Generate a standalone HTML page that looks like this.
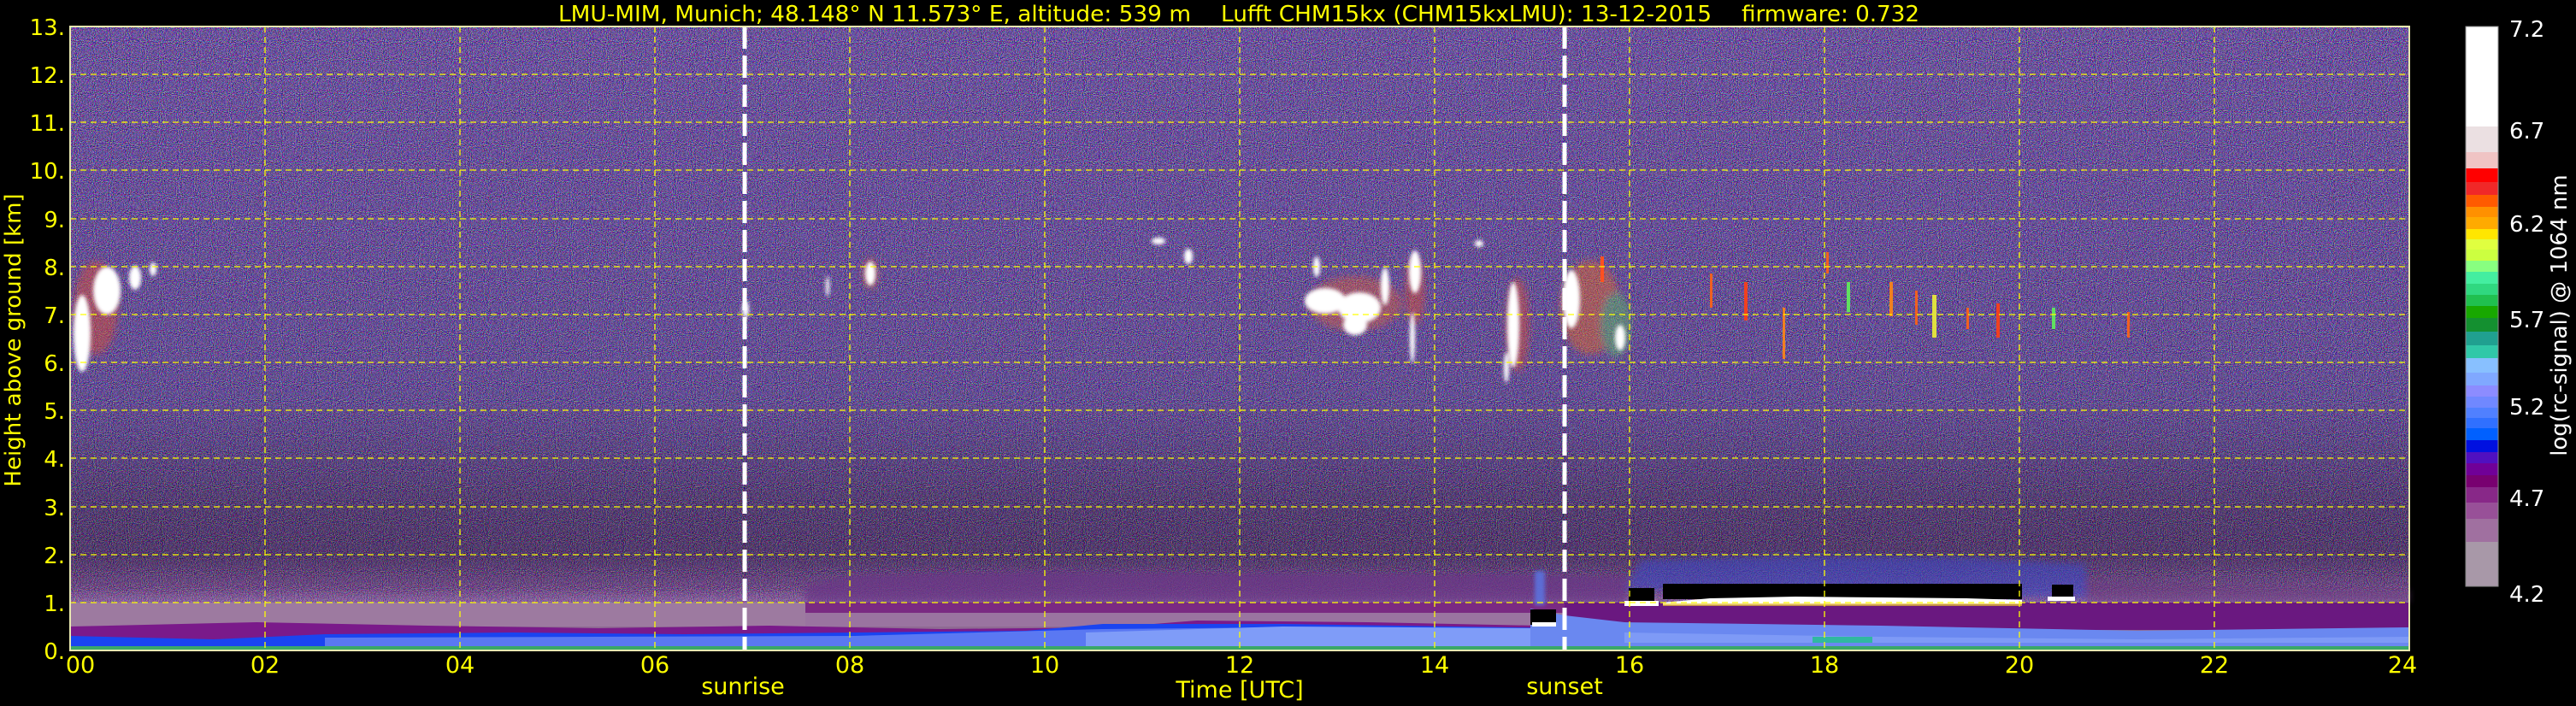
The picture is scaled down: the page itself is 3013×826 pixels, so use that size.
<!DOCTYPE html>
<html><head><meta charset="utf-8"><style>
html,body{margin:0;padding:0;background:#000;width:3013px;height:826px;overflow:hidden}
svg{display:block}
text{font-family:"DejaVu Sans","Liberation Sans",sans-serif}
</style></head><body>
<svg width="3013" height="826" viewBox="0 0 3013 826" xmlns="http://www.w3.org/2000/svg">
<defs>
<filter id="nz" x="0" y="0" width="100%" height="100%">
<feTurbulence type="fractalNoise" baseFrequency="0.95" numOctaves="1" seed="3" result="t"/>
<feColorMatrix in="t" type="matrix" values="6 0 0 0 -2.6  0 6 0 0 -2.9  0 0 6 0 -2.2  0 0 0 0 1"/>
</filter>
<filter id="bl" x="-50%" y="-50%" width="200%" height="200%"><feGaussianBlur stdDeviation="4"/></filter>
<filter id="bl2" x="-50%" y="-50%" width="200%" height="200%"><feGaussianBlur stdDeviation="2"/></filter>
<linearGradient id="bg" x1="0" y1="31" x2="0" y2="761" gradientUnits="userSpaceOnUse">
<stop offset="0" stop-color="#4a4676"/>
<stop offset="0.6" stop-color="#43406c"/>
<stop offset="0.77" stop-color="#30283e"/>
<stop offset="0.85" stop-color="#30243a"/>
<stop offset="0.9" stop-color="#5a3e62"/>
<stop offset="0.925" stop-color="#8a6890"/>
<stop offset="1" stop-color="#946c96"/>
</linearGradient>
<linearGradient id="fade" x1="0" y1="31" x2="0" y2="705" gradientUnits="userSpaceOnUse">
<stop offset="0" stop-color="#fff" stop-opacity="0.5"/>
<stop offset="0.6" stop-color="#fff" stop-opacity="0.45"/>
<stop offset="1" stop-color="#fff" stop-opacity="0.35"/>
</linearGradient>
<mask id="fm"><rect x="82" y="31" width="2736" height="674" fill="url(#fade)"/></mask>
</defs>

<rect x="82" y="31" width="2736" height="730" fill="url(#bg)"/>
<rect x="82" y="31" width="2736" height="674" filter="url(#nz)" mask="url(#fm)"/>

<g filter="url(#bl)">
<path d="M942 705 L942 685 L1000 672 L1200 668 L1500 670 L1800 672 L1902 675 L1902 705Z" fill="#6a3485" opacity="0.75"/>
<path d="M1900 690 L1920 655 L2100 650 L2300 652 L2440 660 L2440 700Z" fill="#3a48c8" opacity="0.55"/>
<path d="M2440 705 L2440 680 L2600 685 L2818 690 L2818 705Z" fill="#6a3a7e" opacity="0.55"/>
</g>

<rect x="82" y="705" width="860" height="28" fill="#9d7aa0"/>
<rect x="942" y="705" width="960" height="12" fill="#7a2a82"/>
<rect x="942" y="717" width="900" height="16" fill="#9a74a0"/>
<rect x="1830" y="705" width="988" height="32" fill="#6a1880"/>
<path d="M82 733 L300 728 L500 732 L700 735 L900 732 L1100 736 L1300 734 L1400 726 L1600 728 L1800 732 L1840 740 L1840 761 L82 761Z" fill="#7a1a8a"/>
<path d="M82 744 L250 748 L380 742 L600 740 L800 742 L1000 740 L1200 738 L1290 730 L1500 730 L1840 735 L1840 758 L82 758Z" fill="#1a44f0"/>
<path d="M380 746 L700 745 L1000 744 L1290 736 L1500 734 L1840 740 L1840 756 L380 756Z" fill="#5a78f2"/>
<path d="M1270 740 L1500 733 L1800 735 L1840 742 L1840 756 L1270 756Z" fill="#7f9cf8"/>
<path d="M1790 712 L1830 720 L1900 728 L2200 732 L2500 738 L2818 734 L2818 757 L1790 757Z" fill="#6a88f0"/>
<path d="M1900 740 L2200 745 L2500 748 L2818 745 L2818 752 L1900 752Z" fill="#7e9af6"/>
<rect x="2120" y="745" width="70" height="7" fill="#30b8a0"/>
<rect x="82" y="756" width="2736" height="5" fill="#3aa868"/>

<rect x="1790" y="713" width="30" height="18" fill="#000"/>
<rect x="1792" y="728" width="28" height="5" fill="#fff"/>
<rect x="1905" y="688" width="30" height="17" fill="#000"/>
<rect x="1945" y="683" width="420" height="18" fill="#000"/>
<rect x="2400" y="684" width="25" height="15" fill="#000"/>
<rect x="1900" y="703" width="40" height="6" fill="#fff"/>
<path d="M1945 705 L2000 700 L2100 698 L2200 699 L2300 700 L2365 702 L2365 707 L1945 708Z" fill="#fff"/>
<rect x="2395" y="698" width="32" height="5" fill="#fff"/>
<rect x="1945" y="706" width="420" height="3" fill="#e8c030" opacity="0.7"/>
<rect x="1795" y="668" width="12" height="40" fill="#5a78e8" opacity="0.8" filter="url(#bl2)"/>

<g filter="url(#bl)" opacity="0.45">
<ellipse cx="112" cy="360" rx="26" ry="55" fill="#e05030"/>
<ellipse cx="1018" cy="320" rx="9" ry="18" fill="#e06030"/>
<ellipse cx="1585" cy="355" rx="55" ry="32" fill="#d86040"/>
<ellipse cx="1655" cy="340" rx="12" ry="40" fill="#e05030"/>
<ellipse cx="1775" cy="380" rx="14" ry="55" fill="#e05030"/>
<ellipse cx="1860" cy="360" rx="35" ry="55" fill="#e86a28"/>
<ellipse cx="1890" cy="380" rx="18" ry="38" fill="#60c060"/>
</g>
<g fill="#fff" filter="url(#bl2)">
<ellipse cx="96" cy="390" rx="10" ry="45"/>
<ellipse cx="125" cy="340" rx="16" ry="28"/>
<ellipse cx="158" cy="325" rx="7" ry="14"/>
<ellipse cx="179" cy="315" rx="4" ry="8"/>
<ellipse cx="872" cy="362" rx="4" ry="10"/>
<ellipse cx="968" cy="335" rx="2" ry="12"/>
<ellipse cx="1018" cy="320" rx="6" ry="14"/>
<ellipse cx="1355" cy="282" rx="8" ry="4"/>
<ellipse cx="1390" cy="300" rx="5" ry="9"/>
<ellipse cx="1540" cy="312" rx="4" ry="12"/>
<ellipse cx="1550" cy="352" rx="24" ry="15"/>
<ellipse cx="1590" cy="360" rx="25" ry="18"/>
<ellipse cx="1585" cy="380" rx="14" ry="12"/>
<ellipse cx="1620" cy="335" rx="5" ry="22"/>
<ellipse cx="1655" cy="318" rx="7" ry="25"/>
<ellipse cx="1652" cy="395" rx="3" ry="30"/>
<ellipse cx="1730" cy="285" rx="5" ry="4"/>
<ellipse cx="1770" cy="380" rx="7" ry="50"/>
<ellipse cx="1762" cy="430" rx="3" ry="18"/>
<ellipse cx="1838" cy="350" rx="10" ry="34"/>
<ellipse cx="1895" cy="395" rx="6" ry="15"/>
</g>
<g fill="#f04020">
<rect x="1872" y="300" width="4" height="30" fill="#ff5020"/>
<rect x="2000" y="320" width="3" height="40" fill="#f06020"/>
<rect x="2040" y="330" width="4" height="45"/>
<rect x="2085" y="360" width="3" height="60" fill="#f08020"/>
<rect x="2136" y="295" width="3" height="25" fill="#f06020"/>
<rect x="2160" y="330" width="4" height="35" fill="#60e060"/>
<rect x="2210" y="330" width="4" height="40" fill="#f08020"/>
<rect x="2240" y="340" width="3" height="40" fill="#f06020"/>
<rect x="2260" y="345" width="5" height="50" fill="#e0e040"/>
<rect x="2300" y="360" width="3" height="25" fill="#f06020"/>
<rect x="2335" y="355" width="4" height="40"/>
<rect x="2400" y="360" width="4" height="25" fill="#60e060"/>
<rect x="2488" y="365" width="3" height="30" fill="#f06020"/>
</g>

<g stroke="#ffff00" stroke-width="1.3" stroke-dasharray="7,5" fill="none">
<path d="M82 87H2818M82 143H2818M82 199H2818M82 256H2818M82 312H2818M82 368H2818M82 424H2818M82 480H2818M82 536H2818M82 593H2818M82 649H2818M82 705H2818"/>
<path d="M310 31V761M538 31V761M766 31V761M994 31V761M1222 31V761M1450 31V761M1678 31V761M1906 31V761M2134 31V761M2362 31V761M2590 31V761"/>
</g>
<g stroke="#fff" stroke-width="5" stroke-dasharray="26,8" fill="none">
<path d="M871 31V761"/><path d="M1830 31V761"/>
</g>
<rect x="82" y="31" width="2736" height="730" fill="none" stroke="#e8e8b0" stroke-width="2"/>

<g font-size="26" fill="#ffff00">
<text x="653" y="25" textLength="740" lengthAdjust="spacingAndGlyphs">LMU-MIM, Munich; 48.148° N 11.573° E, altitude: 539 m</text>
<text x="1428" y="25" textLength="574" lengthAdjust="spacingAndGlyphs">Lufft CHM15kx (CHM15kxLMU): 13-12-2015</text>
<text x="2037" y="25" textLength="208" lengthAdjust="spacingAndGlyphs">firmware: 0.732</text>
</g>

<g font-size="26" fill="#ffff00" text-anchor="end">
<text x="76" y="41">13.</text><text x="76" y="97">12.</text><text x="76" y="153">11.</text><text x="76" y="209">10.</text>
<text x="76" y="266">9.</text><text x="76" y="322">8.</text><text x="76" y="378">7.</text><text x="76" y="434">6.</text>
<text x="76" y="490">5.</text><text x="76" y="546">4.</text><text x="76" y="603">3.</text><text x="76" y="659">2.</text>
<text x="76" y="715">1.</text><text x="76" y="771">0.</text>
</g>
<text transform="translate(24,398) rotate(-90)" font-size="26" fill="#ffff00" text-anchor="middle">Height above ground [km]</text>

<g font-size="27" fill="#ffff00" text-anchor="middle">
<text x="94" y="787">00</text><text x="310" y="787">02</text><text x="538" y="787">04</text><text x="766" y="787">06</text>
<text x="994" y="787">08</text><text x="1222" y="787">10</text><text x="1450" y="787">12</text><text x="1678" y="787">14</text>
<text x="1906" y="787">16</text><text x="2134" y="787">18</text><text x="2362" y="787">20</text><text x="2590" y="787">22</text>
<text x="2810" y="787">24</text>
</g>
<text x="869" y="812" font-size="27" fill="#ffff00" text-anchor="middle">sunrise</text>
<text x="1830" y="812" font-size="27" fill="#ffff00" text-anchor="middle">sunset</text>
<text x="1450" y="816" font-size="27" fill="#ffff00" text-anchor="middle">Time [UTC]</text>

<g>
<rect x="2884" y="31" width="38" height="118" fill="#ffffff"/>
<rect x="2884" y="148" width="38" height="31" fill="#ebe0e2"/>
<rect x="2884" y="178" width="38" height="20" fill="#f0c4c4"/>
<rect x="2884" y="197" width="38" height="17" fill="#ff0000"/>
<rect x="2884" y="213" width="38" height="16" fill="#f02828"/>
<rect x="2884" y="228" width="38" height="15" fill="#ff5a00"/>
<rect x="2884" y="242" width="38" height="13" fill="#ff9000"/>
<rect x="2884" y="254" width="38" height="15" fill="#ffaa00"/>
<rect x="2884" y="268" width="38" height="13" fill="#ffe600"/>
<rect x="2884" y="280" width="38" height="13" fill="#e0ff40"/>
<rect x="2884" y="292" width="38" height="14" fill="#ccff40"/>
<rect x="2884" y="305" width="38" height="14" fill="#88ff80"/>
<rect x="2884" y="318" width="38" height="15" fill="#44eea0"/>
<rect x="2884" y="332" width="38" height="14" fill="#30d880"/>
<rect x="2884" y="345" width="38" height="14" fill="#20c050"/>
<rect x="2884" y="358" width="38" height="15" fill="#18a800"/>
<rect x="2884" y="372" width="38" height="17" fill="#149030"/>
<rect x="2884" y="388" width="38" height="17" fill="#20a090"/>
<rect x="2884" y="404" width="38" height="16" fill="#30c8a8"/>
<rect x="2884" y="419" width="38" height="18" fill="#88c0ff"/>
<rect x="2884" y="436" width="38" height="16" fill="#80a8ff"/>
<rect x="2884" y="451" width="38" height="14" fill="#8c8cff"/>
<rect x="2884" y="464" width="38" height="14" fill="#7088ff"/>
<rect x="2884" y="477" width="38" height="13" fill="#5080ff"/>
<rect x="2884" y="489" width="38" height="13" fill="#3070ff"/>
<rect x="2884" y="501" width="38" height="15" fill="#0060ff"/>
<rect x="2884" y="515" width="38" height="15" fill="#0010e0"/>
<rect x="2884" y="529" width="38" height="14" fill="#5010c0"/>
<rect x="2884" y="542" width="38" height="15" fill="#700098"/>
<rect x="2884" y="556" width="38" height="15" fill="#780070"/>
<rect x="2884" y="570" width="38" height="19" fill="#882888"/>
<rect x="2884" y="588" width="38" height="20" fill="#985098"/>
<rect x="2884" y="607" width="38" height="28" fill="#a070a0"/>
<rect x="2884" y="634" width="38" height="52" fill="#a898a8"/>
<rect x="2884" y="31" width="38" height="655" fill="none" stroke="#888" stroke-width="1"/>
</g>
<g font-size="26" fill="#ffffff">
<text x="2935" y="43">7.2</text><text x="2935" y="162">6.7</text><text x="2935" y="271">6.2</text>
<text x="2935" y="383">5.7</text><text x="2935" y="485">5.2</text><text x="2935" y="592">4.7</text><text x="2935" y="704">4.2</text>
</g>
<text transform="translate(3002,369) rotate(-90)" font-size="26" fill="#ffffff" text-anchor="middle">log(rc-signal) @ 1064 nm</text>
</svg>
</body></html>
